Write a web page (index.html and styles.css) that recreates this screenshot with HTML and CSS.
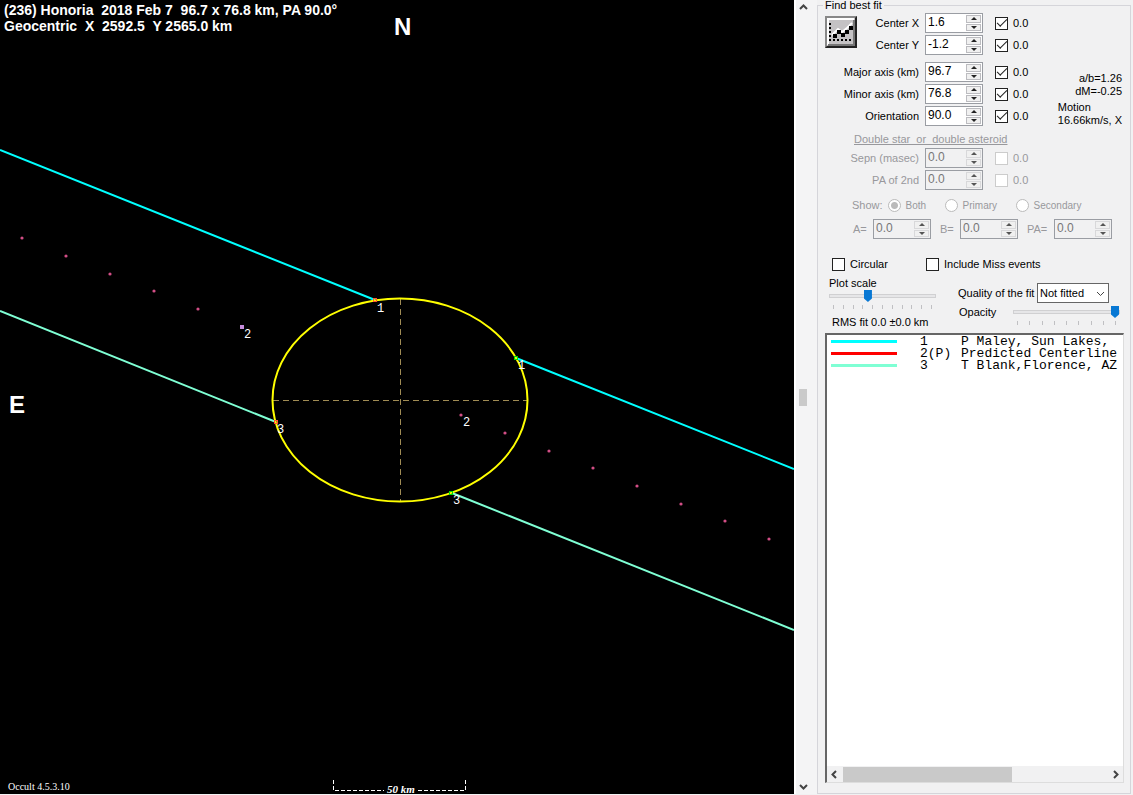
FILE: index.html
```html
<!DOCTYPE html>
<html lang="en">
<head>
<meta charset="utf-8">
<title>Occult - (236) Honoria</title>
<link rel="stylesheet" href="styles.css">
</head>
<body>
<main class="app">
  <svg class="plot" viewBox="0 0 794 794" preserveAspectRatio="xMinYMin meet" role="img" aria-label="Occultation chords and fitted ellipse">
    <g class="plot-title">
      <text x="4" y="15">(236) Honoria  2018 Feb 7  96.7 x 76.8 km, PA 90.0°</text>
      <text x="4" y="31">Geocentric  X  2592.5  Y 2565.0 km</text>
    </g>
    <text class="compass" x="394" y="35">N</text>
    <text class="compass" x="9" y="413">E</text>
    <g fill="none" stroke-width="2">
      <path stroke="#00ffff" d="M0 150L375 300M516 358L794 469"/>
      <path stroke="#7fffd4" d="M0 311L276 422M452 493L794 630"/>
      <path class="axis" d="M273 400.500H527M400.500 299V501"/>
      <ellipse stroke="#ffff00" cx="400" cy="400" rx="127.500" ry="101.500"/>
    </g>
    <g fill="none" stroke="#ff5533">
      <rect x="373.500" y="298.500" width="3" height="3"/>
      <rect x="274.500" y="420.500" width="3" height="3"/>
    </g>
    <g fill="none" stroke="#00dd00">
      <rect x="514.500" y="356.500" width="3" height="3"/>
      <rect x="449.500" y="491.500" width="3" height="3"/>
    </g>
    <g fill="#d24e86">
      <circle cx="22" cy="238" r="1.600"/><circle cx="66" cy="256" r="1.600"/>
      <circle cx="110" cy="274" r="1.600"/><circle cx="154" cy="291" r="1.600"/>
      <circle cx="198" cy="309" r="1.600"/><circle cx="461" cy="415" r="1.600"/>
      <circle cx="505" cy="433" r="1.600"/><circle cx="549" cy="451" r="1.600"/>
      <circle cx="593" cy="468" r="1.600"/><circle cx="637" cy="486" r="1.600"/>
      <circle cx="681" cy="504" r="1.600"/><circle cx="725" cy="521" r="1.600"/>
      <circle cx="769" cy="539" r="1.600"/>
    </g>
    <rect x="240" y="325" width="4" height="4" fill="#c58cdc"/>
    <g class="chord-label">
      <text x="377" y="312">1</text><text x="518" y="369">1</text>
      <text x="244" y="338">2</text><text x="463" y="426">2</text>
      <text x="277" y="433">3</text><text x="453" y="504">3</text>
    </g>
    <text class="version" x="8" y="790">Occult 4.5.3.10</text>
    <path fill="none" stroke="#fff" stroke-dasharray="4 2" d="M333.500 780V790.500H384M465.500 780V790.500H416"/>
    <text class="scale" x="387" y="793">50 km</text>
  </svg>

  <div class="track">
    <svg width="9" height="6" viewBox="0 0 9 6"><path d="M1 5L4.500 1.500L8 5"/></svg>
    <span class="track-thumb"></span>
    <svg width="9" height="6" viewBox="0 0 9 6"><path d="M1 1L4.500 4.500L8 1"/></svg>
  </div>

  <fieldset class="panel">
    <legend>Find best fit</legend>

    <div class="fit">
      <button class="fit-button" aria-label="Find best fit">
        <svg width="28" height="28" viewBox="0 0 28 28">
          <path fill="none" stroke="#fff" stroke-width="2" d="M1 27V1H27M5 17L11 11L15 14L20 10L25 5"/>
          <path fill="none" stroke="#777" stroke-width="2" d="M1 27H27V2"/>
          <path fill="#000" d="M2 5h2v2H2zM2 9h2v2H2zM2 13h2v2H2zM2 17h2v2H2zM2 21h2v2H2zM6 21h2v2H6zM10 21h2v2h-2zM14 21h2v2h-2zM18 21h2v2h-2zM22 21h2v2h-2zM6 16h4v4H6zM10 12h4v4h-4zM14 15h4v4h-4zM18 12h4v4h-4zM22 8h4v4h-4z"/>
        </svg>
      </button>
      <div class="rows">
        <div class="row"><label for="cx">Center X</label><span class="spin"><input id="cx" value="1.6"><span class="steps"><button aria-label="Up"></button><button aria-label="Down"></button></span></span><label class="tick"><input type="checkbox" checked>0.0</label></div>
        <div class="row"><label for="cy">Center Y</label><span class="spin"><input id="cy" value="-1.2"><span class="steps"><button aria-label="Up"></button><button aria-label="Down"></button></span></span><label class="tick"><input type="checkbox" checked>0.0</label></div>
        <div class="row row-gap"><label for="major">Major axis (km)</label><span class="spin"><input id="major" value="96.7"><span class="steps"><button aria-label="Up"></button><button aria-label="Down"></button></span></span><label class="tick"><input type="checkbox" checked>0.0</label></div>
        <div class="row"><label for="minor">Minor axis (km)</label><span class="spin"><input id="minor" value="76.8"><span class="steps"><button aria-label="Up"></button><button aria-label="Down"></button></span></span><label class="tick"><input type="checkbox" checked>0.0</label></div>
        <div class="row"><label for="orient">Orientation</label><span class="spin"><input id="orient" value="90.0"><span class="steps"><button aria-label="Up"></button><button aria-label="Down"></button></span></span><label class="tick"><input type="checkbox" checked>0.0</label></div>
      </div>
      <div class="facts">
        <div class="facts-right">a/b=1.26<br>dM=-0.25</div>
        <div>Motion<br>16.66km/s, X</div>
      </div>
    </div>

    <section class="double">
      <h2>Double star&nbsp; or&nbsp; double asteroid</h2>
      <div class="row"><label for="sepn">Sepn (masec)</label><span class="spin"><input id="sepn" value="0.0" disabled><span class="steps"><button disabled aria-label="Up"></button><button disabled aria-label="Down"></button></span></span><label class="tick"><input type="checkbox" disabled>0.0</label></div>
      <div class="row"><label for="pa2">PA of 2nd</label><span class="spin"><input id="pa2" value="0.0" disabled><span class="steps"><button disabled aria-label="Up"></button><button disabled aria-label="Down"></button></span></span><label class="tick"><input type="checkbox" disabled>0.0</label></div>
      <div class="show">
        <span>Show:</span>
        <label><input type="radio" name="show" checked disabled>Both</label>
        <label><input type="radio" name="show" disabled>Primary</label>
        <label><input type="radio" name="show" disabled>Secondary</label>
      </div>
      <div class="abpa">
        <label for="a">A=</label><span class="spin"><input id="a" value="0.0" disabled><span class="steps"><button disabled aria-label="Up"></button><button disabled aria-label="Down"></button></span></span>
        <label for="b">B=</label><span class="spin"><input id="b" value="0.0" disabled><span class="steps"><button disabled aria-label="Up"></button><button disabled aria-label="Down"></button></span></span>
        <label for="pa">PA=</label><span class="spin"><input id="pa" value="0.0" disabled><span class="steps"><button disabled aria-label="Up"></button><button disabled aria-label="Down"></button></span></span>
      </div>
    </section>

    <div class="options">
      <label class="tick"><input type="checkbox">Circular</label>
      <label class="tick"><input type="checkbox">Include Miss events</label>
    </div>

    <div class="display">
      <div class="display-left">
        <label for="zoom">Plot scale</label>
        <div class="slider"><input id="zoom" type="range" min="0" max="100" value="35"><div class="ticks"><i></i><i></i><i></i><i></i><i></i><i></i><i></i><i></i><i></i><i></i><i></i></div></div>
        <div class="rms">RMS fit 0.0 ±0.0 km</div>
      </div>
      <div class="display-right">
        <div class="quality"><label for="quality">Quality of the fit</label><span class="select"><select id="quality"><option>Not fitted</option></select><svg width="9" height="6" viewBox="0 0 9 6"><path d="M1 1L4.500 4.500L8 1"/></svg></span></div>
        <div class="opacity"><label for="opacity">Opacity</label><div class="slider"><input id="opacity" type="range" min="0" max="100" value="100"><div class="ticks"><i></i><i></i><i></i><i></i><i></i><i></i><i></i><i></i><i></i></div></div></div>
      </div>
    </div>

    <div class="list">
      <div class="list-view">
        <table>
          <tr><td><span class="swatch cyan"></span></td><td>1</td><td>P Maley, Sun Lakes,</td></tr>
          <tr><td><span class="swatch red"></span></td><td>2(P)</td><td>Predicted Centerline</td></tr>
          <tr><td><span class="swatch aqua"></span></td><td>3</td><td>T Blank,Florence, AZ</td></tr>
        </table>
      </div>
      <div class="hscroll">
        <svg width="6" height="9" viewBox="0 0 6 9"><path d="M5 1L1.500 4.500L5 8"/></svg>
        <div class="hscroll-bar"><span></span></div>
        <svg width="6" height="9" viewBox="0 0 6 9"><path d="M1 1L4.500 4.500L1 8"/></svg>
      </div>
    </div>
  </fieldset>
</main>
</body>
</html>
```
FILE: styles.css
```css
* { box-sizing: border-box; }
body { margin: 0; background: #f1f1f2; color: #000; font: 11px/13px "Liberation Sans", Arial, sans-serif; }
button, input, select { font: inherit; color: inherit; margin: 0; }
.app { display: flex; height: 100vh; min-height: 600px; padding: 0 2px 1px 0; }

.plot { flex: 1; min-width: 0; height: 100%; background: #000; }
.plot text { fill: #fff; white-space: pre; }
.plot-title { font-size: 14px; font-weight: bold; }
.plot .compass { font-size: 24px; font-weight: bold; }
.chord-label { font: 12px "Liberation Mono", monospace; }
.axis { stroke: #a08c54; stroke-width: 1; stroke-dasharray: 6 4; }
.version { font: 10px "Liberation Serif", serif; }
.scale { font: italic bold 11px "Liberation Serif", serif; }

.track { width: 23px; padding: 4px 9px 4px 2px; display: flex; flex-direction: column; align-items: center; justify-content: space-between; background: #f4f4f5; border-left: 2px solid #fff; }
.track-thumb { width: 8px; height: 17px; background: #cacaca; }
.track svg, .select svg, .hscroll svg { fill: none; stroke: #444; stroke-width: 2; flex: none; }

.panel { width: 314px; min-width: 0; margin: 0; padding: 1px 6px 10px 7px; border: 1px solid #d5d5da; display: flex; flex-direction: column; }
legend { padding: 0 2px; margin-left: -2px; line-height: 11px; }

.fit { display: flex; }
.fit-button { flex: none; width: 32px; height: 32px; margin-top: 4px; padding: 0; background: #c4c2c4; border: 2px solid; border-color: #888 #222 #222 #888; }
.fit-button svg { display: block; }
.rows { flex: none; width: 178px; }
.row { height: 22px; display: grid; grid-template-columns: 1fr 58px 40px; align-items: center; }
.row > label:first-child { text-align: right; padding-right: 6px; }
.row .tick { margin-left: 12px; }
.fit .row { width: 178px; grid-template-columns: 68px 58px 1fr; }
.fit .row > label:first-child { white-space: nowrap; justify-self: end; }
.row-gap { margin-top: 5px; }
.facts { flex: 1; padding: 60px 2px 0 0; white-space: nowrap; display: flex; flex-direction: column; gap: 3px; align-items: flex-end; }
.facts-right { text-align: right; }

.spin { width: 58px; height: 20px; display: flex; background: #fff; border: 1px solid #9a9da3; padding: 1px; }
.spin > input { flex: 1; min-width: 0; border: 0; padding: 0 1px 2px; background: none; outline: 0; font-size: 12px; }
.steps { width: 15px; display: flex; flex-direction: column; gap: 1px; }
.steps button { flex: 1; min-height: 0; padding: 0; border: 1px solid #bcbcc0; background: #f0f0f0; display: flex; align-items: center; justify-content: center; }
.steps button::before { content: ""; border: 3px solid transparent; border-top: 0; border-bottom-color: #222; }
.steps button:last-child::before { border: 3px solid transparent; border-bottom: 0; border-top-color: #222; }
.steps button:disabled { border-color: #d8d8da; }
.steps button:disabled::before { border-bottom-color: #555; }
.steps button:disabled:last-child::before { border-bottom-color: transparent; border-top-color: #555; }

.tick { display: flex; align-items: center; gap: 5px; white-space: nowrap; }
.tick input { appearance: none; width: 13px; height: 13px; border: 1px solid #222; background: #fff; display: grid; place-items: center; }
.tick input:checked::before { content: ""; width: 9px; height: 4px; border: solid #222; border-width: 0 0 1px 1px; transform: rotate(-45deg); margin-bottom: 3px; }
.tick input:disabled { border-color: #ccc; }

.double { color: #98989c; padding-top: 5px; }
.double h2 { margin: 0 0 1px 29px; font: inherit; line-height: 14px; text-decoration: underline; }
.double .row { width: 210px; grid-template-columns: 100px 58px 1fr; }
.double .spin { background: #f1f1f2; }
.double .spin > input { color: #777; }
.show { height: 22px; margin: 3px 0 2px 27px; display: flex; align-items: center; gap: 5px; }
.show label { width: 71px; display: flex; align-items: center; gap: 5px; font-size: 10px; flex: none; }
.show label:nth-of-type(1) { width: 52px; }
.show label:nth-of-type(2) { width: 66px; }
.show input { appearance: none; width: 13px; height: 13px; flex: none; border: 1px solid #bbb; border-radius: 50%; background: #fff; }
.show input:checked { background: radial-gradient(circle, #bbb 0 3px, #fff 4px); }
.abpa { height: 22px; padding-left: 28px; display: flex; align-items: center; }
.abpa label { width: 20px; flex: none; }
.abpa .spin { margin-right: 9px; flex: none; }
.abpa label:nth-of-type(3) { width: 27px; }

.options { margin: 17px 0 6px 7px; display: grid; grid-template-columns: 94px 1fr; height: 14px; }
.display { height: 56px; display: grid; grid-template-columns: 133px 1fr; }
.display-left { padding-left: 4px; }
.display-left > label { display: block; }
.display-left .slider { width: 107px; }
.rms { padding: 7px 0 0 3px; }
.display-right { padding-top: 6px; }
.quality { display: flex; align-items: center; justify-content: space-between; padding-right: 15px; height: 20px; white-space: nowrap; }
.select { position: relative; width: 72px; height: 20px; }
.select select { width: 100%; height: 100%; appearance: none; border: 1px solid #666; border-radius: 0; background: #fff; padding: 0 2px; }
.select svg { position: absolute; right: 4px; top: 8px; stroke-width: 1; pointer-events: none; }
.opacity { display: flex; justify-content: space-between; padding: 3px 4px 0 1px; }
.opacity .slider { width: 107px; }
.slider { height: 19px; display: flex; flex-direction: column; }
.slider input { appearance: none; width: 100%; height: 12px; background: none; }
.slider input::-webkit-slider-runnable-track { height: 4px; background: #e6e6e8; border: 1px solid #d0d0d2; }
.slider input::-webkit-slider-thumb { appearance: none; width: 8px; height: 12px; margin-top: -5px; background: #0878d4; clip-path: polygon(0 0, 100% 0, 100% 70%, 50% 100%, 0 70%); }
.ticks { height: 4px; margin: 3px 4px 0; display: flex; justify-content: space-between; }
.ticks i { width: 1px; background: #c0c0c3; }

.list { flex: 1; min-height: 0; background: #fff; border: 1px solid #ddd; border-top: 2px solid #666; border-left: 2px solid #666; display: flex; flex-direction: column; }
.list-view { flex: 1; overflow: hidden; padding: 1px 0 0 4px; }
.list table { border-collapse: collapse; font: 13px/12px "Liberation Mono", monospace; white-space: pre; }
.list td { padding: 0; height: 12px; }
.list td:first-child { width: 89px; min-width: 89px; }
.list td:nth-child(2) { width: 41px; min-width: 41px; }
.swatch { display: block; width: 66px; height: 3px; margin-bottom: 2px; }
.cyan { background: #00ffff; }
.red { background: #ff0000; }
.aqua { background: #7fffd4; }
.hscroll { height: 16px; padding: 0 4px; display: flex; align-items: center; gap: 6px; background: #f1f1f2; }
.hscroll-bar { flex: 1; height: 15px; }
.hscroll-bar span { display: block; width: 64%; height: 100%; background: #c9c9c9; }
```
